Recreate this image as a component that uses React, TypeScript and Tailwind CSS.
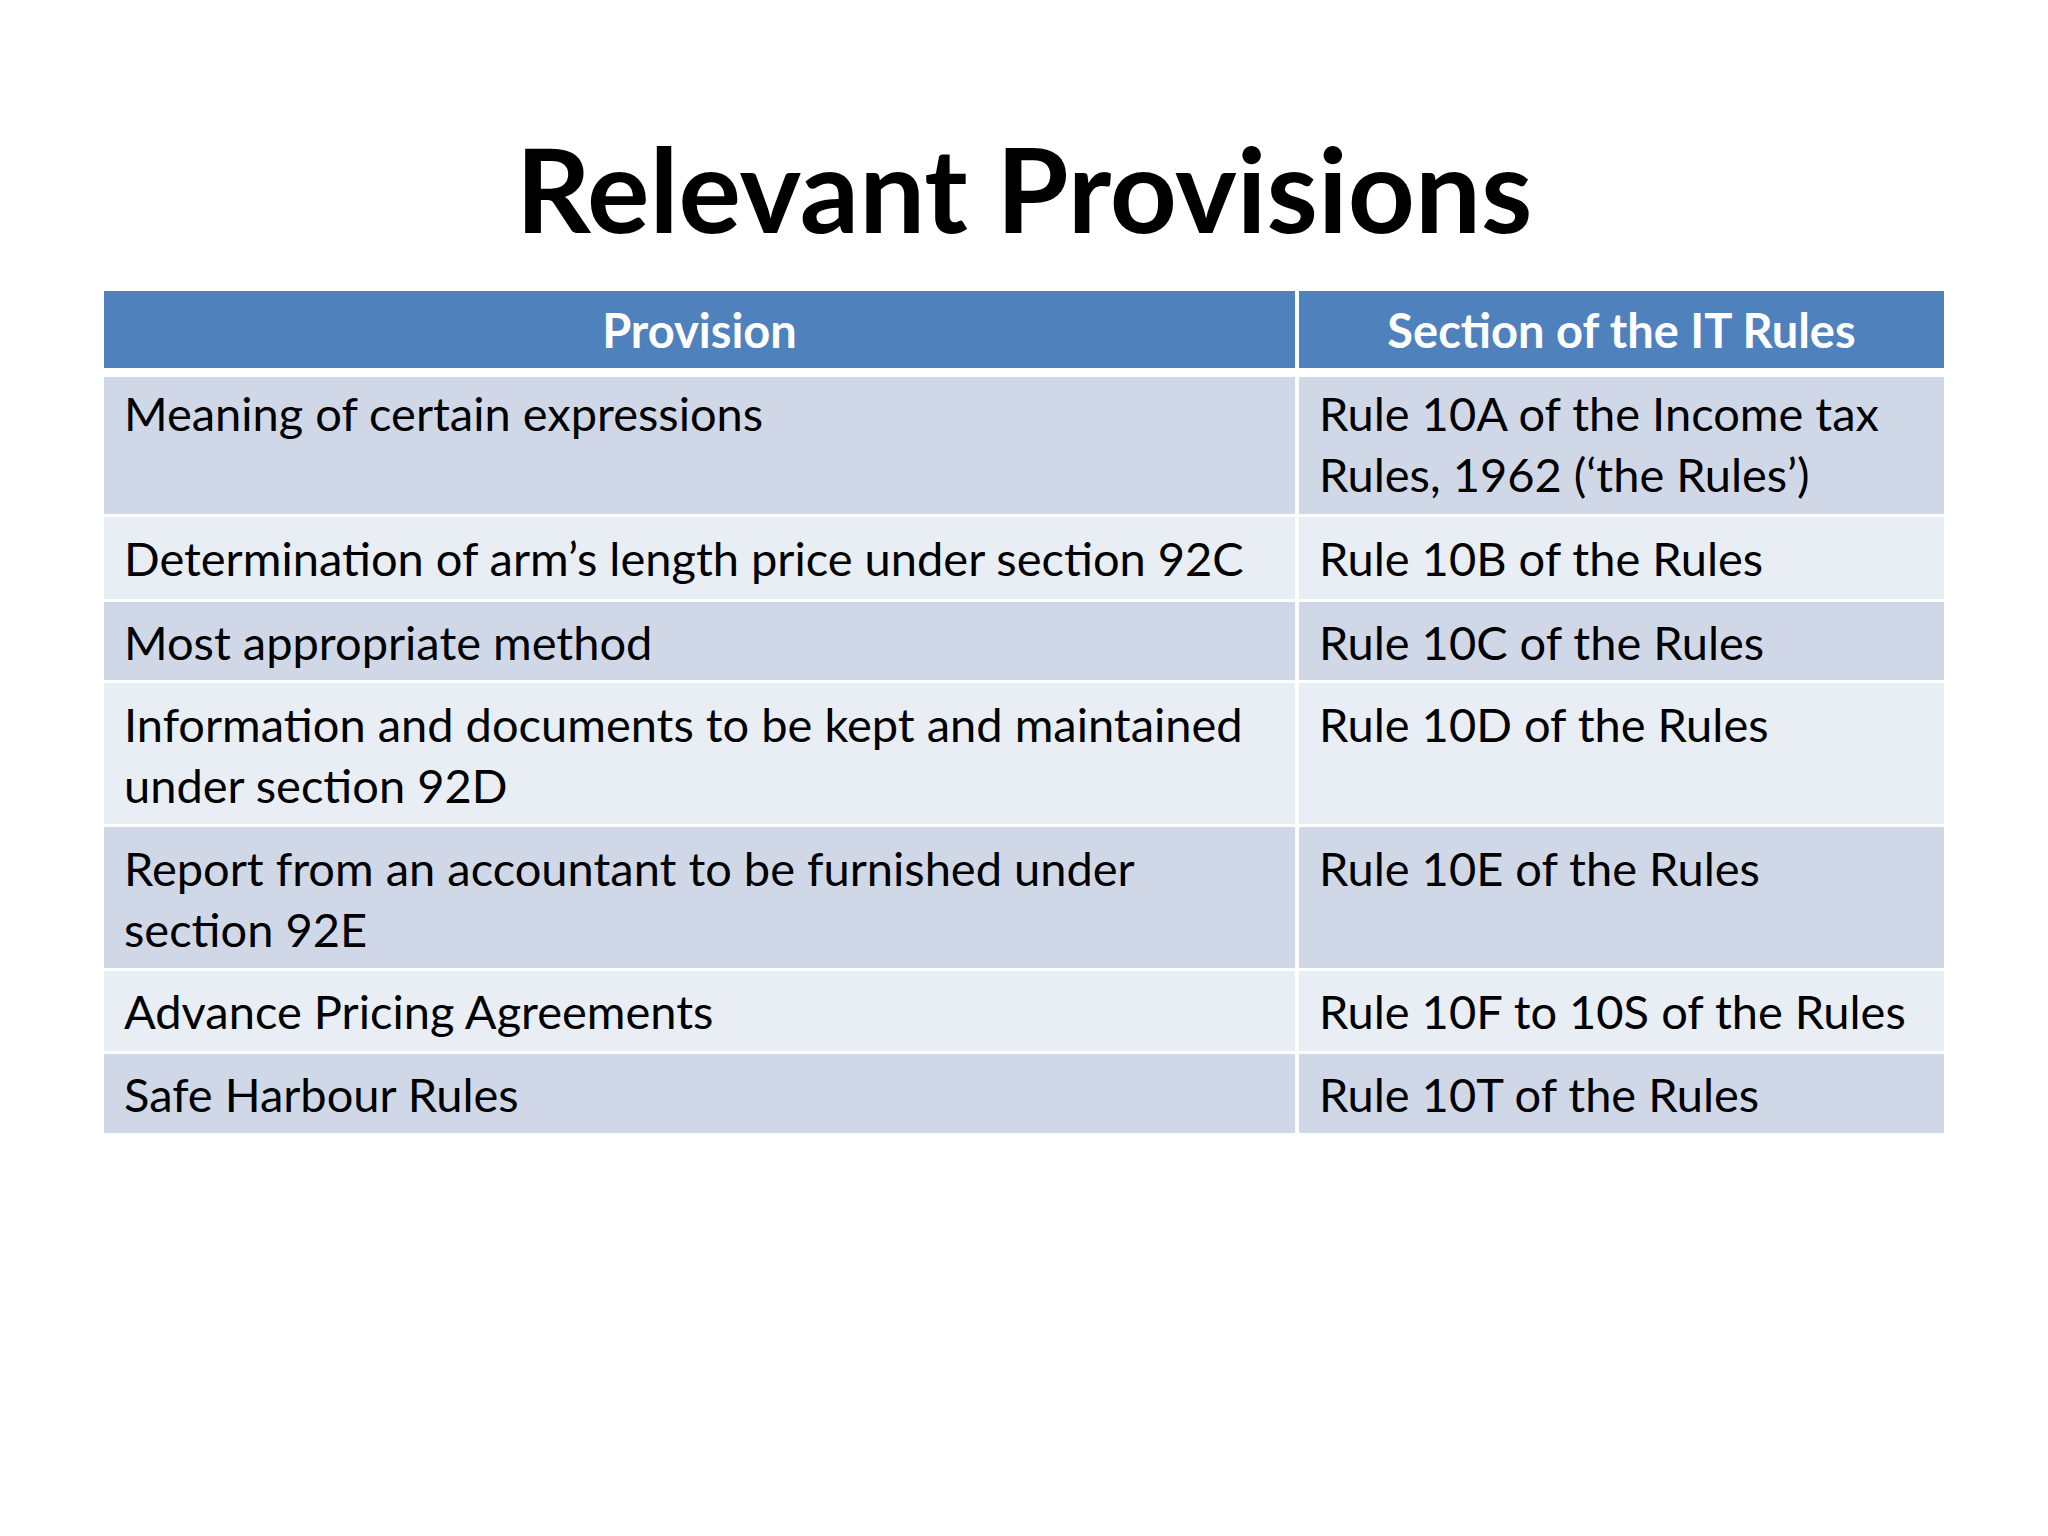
const rows = [
  {
    provision: ["Meaning of certain expressions"],
    rule: ["Rule 10A of the Income tax", "Rules, 1962 (‘the Rules’)"],
    height: "h-[137px]",
    pad: "pt-[6px]",
    bg: "bg-[#d0d8e8]",
  },
  {
    provision: ["Determination of arm’s length price under section 92C"],
    rule: ["Rule 10B of the Rules"],
    height: "h-[82px]",
    pad: "pt-[11px]",
    bg: "bg-[#e9edf4]",
  },
  {
    provision: ["Most appropriate method"],
    rule: ["Rule 10C of the Rules"],
    height: "h-[78px]",
    pad: "pt-[10px]",
    bg: "bg-[#d0d8e8]",
  },
  {
    provision: ["Information and documents to be kept and maintained", "under section 92D"],
    rule: ["Rule 10D of the Rules"],
    height: "h-[141px]",
    pad: "pt-[11px]",
    bg: "bg-[#e9edf4]",
  },
  {
    provision: ["Report from an accountant to be furnished under", "section 92E"],
    rule: ["Rule 10E of the Rules"],
    height: "h-[141px]",
    pad: "pt-[11px]",
    bg: "bg-[#d0d8e8]",
  },
  {
    provision: ["Advance Pricing Agreements"],
    rule: ["Rule 10F to 10S of the Rules"],
    height: "h-[80px]",
    pad: "pt-[10px]",
    bg: "bg-[#e9edf4]",
  },
  {
    provision: ["Safe Harbour Rules"],
    rule: ["Rule 10T of the Rules"],
    height: "h-[79px]",
    pad: "pt-[10px]",
    bg: "bg-[#d0d8e8]",
  },
];

const Lines = ({ lines }: { lines: string[] }) => (
  <>
    {lines.map((line) => (
      <div key={line} className="whitespace-nowrap">
        {line}
      </div>
    ))}
  </>
);

const App = () => {
  return (
    <div className="flex h-[1536px] w-[2048px] flex-col items-center bg-white pt-[118px] font-['Lato','Open_Sans',sans-serif] text-black">
      <h1 className="text-[117px] leading-[140px] font-bold">Relevant Provisions</h1>

      <div className="mt-[33px] flex w-[1840px] flex-col gap-[3px] text-[47px] leading-[61px]">
        <div className="mb-[6px] grid h-[77px] grid-cols-[1191px_645px] gap-x-[4px] font-bold text-white">
          <div className="flex items-center justify-center bg-[#4f81bd] pt-[2px]">Provision</div>
          <div className="flex items-center justify-center bg-[#4f81bd] pt-[2px]">
            Section of the IT Rules
          </div>
        </div>

        {rows.map((row) => (
          <div
            key={row.rule[0]}
            className={`grid grid-cols-[1191px_645px] gap-x-[4px] ${row.height}`}>
            <div className={`${row.bg} ${row.pad} pl-[20px]`}>
              <Lines lines={row.provision} />
            </div>
            <div className={`${row.bg} ${row.pad} pl-[20px]`}>
              <Lines lines={row.rule} />
            </div>
          </div>
        ))}
      </div>
    </div>
  );
};

export default App;
